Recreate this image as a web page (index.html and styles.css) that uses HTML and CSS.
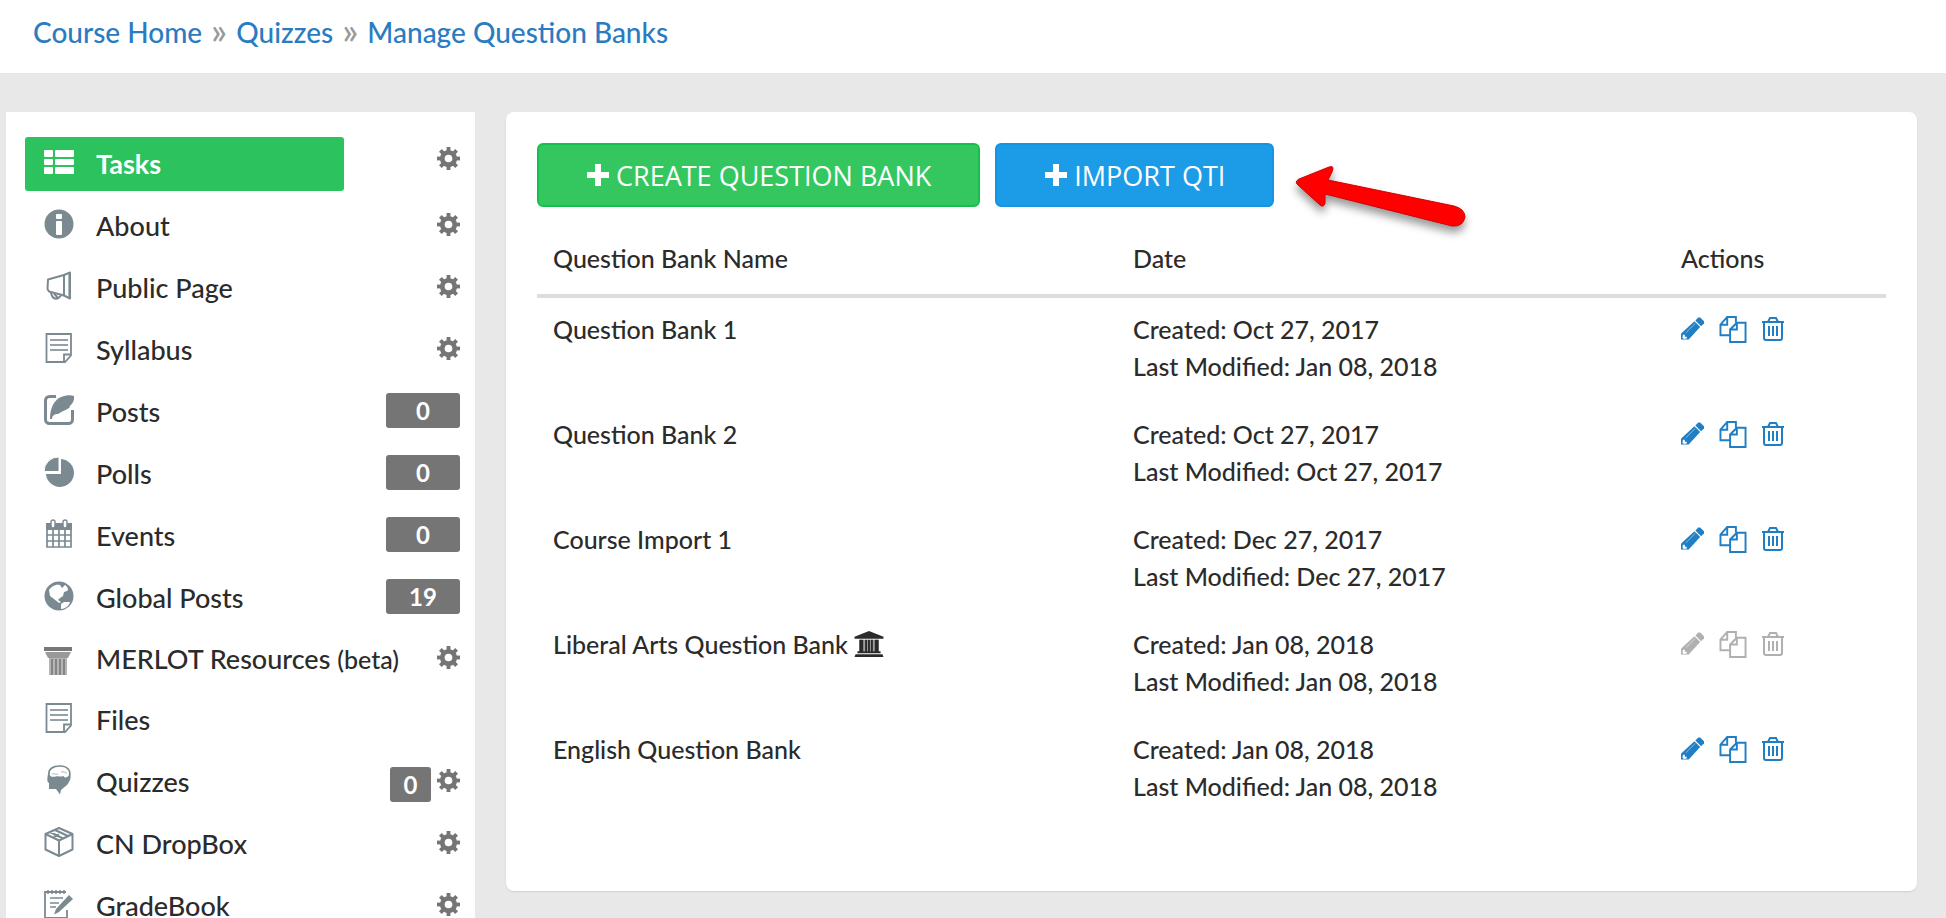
FILE: index.html
```html
<!DOCTYPE html>
<html lang="en">
<head>
    <meta charset="UTF-8">
    <title>Manage Question Banks</title>
    <link rel="stylesheet" href="styles.css">
</head>
<body>
    <!-- icon sprite -->
    <svg class="sprite" aria-hidden="true">
        <symbol id="i-cog" viewBox="0 0 24 24">
            <g fill="currentColor">
                <rect x="10" y="0" width="4" height="24"/>
                <rect x="10" y="0" width="4" height="24" transform="rotate(45 12 12)"/>
                <rect x="10" y="0" width="4" height="24" transform="rotate(90 12 12)"/>
                <rect x="10" y="0" width="4" height="24" transform="rotate(135 12 12)"/>
                <circle cx="12" cy="12" r="9"/>
            </g>
            <circle cx="12" cy="12" r="4" fill="#fff"/>
        </symbol>
        <symbol id="i-tasks" viewBox="0 0 30 30">
            <g fill="currentColor">
                <rect x="0" y="3" width="9" height="7" rx="1"/><rect x="11" y="3" width="19" height="7" rx="1"/>
                <rect x="0" y="12" width="9" height="6" rx="1"/><rect x="11" y="12" width="19" height="6" rx="1"/>
                <rect x="0" y="20" width="9" height="7" rx="1"/><rect x="11" y="20" width="19" height="7" rx="1"/>
            </g>
        </symbol>
        <symbol id="i-info" viewBox="0 0 30 30">
            <circle cx="15" cy="15" r="14.5" fill="currentColor"/>
            <rect x="12" y="5" width="6" height="5" rx="1" fill="#fff"/>
            <rect x="12" y="12" width="6" height="14" rx="1" fill="#fff"/>
        </symbol>
        <symbol id="i-horn" viewBox="0 0 30 30">
            <g fill="none" stroke="currentColor" stroke-width="2" stroke-linejoin="round">
                <path d="M20 4 4 8.500 3.500 18 5 20.500 20 24.500z"/>
                <path d="M20 4 26 1.500V27.500L20 24.500"/>
                <path d="M7 21.500C8 28 13 30 17 24.500M10 22.500 14 27"/>
            </g>
            <path d="M24 2.500 27 1V28L24 26.500z" fill="currentColor" opacity=".6"/>
        </symbol>
        <symbol id="i-doc" viewBox="0 0 30 30">
            <path d="M2.500 1H27V22.500L21 29H2.500z" fill="none" stroke="currentColor" stroke-width="1.800"/>
            <path d="M26.500 21.500H20V28.500" fill="none" stroke="currentColor" stroke-width="1.800"/>
            <path d="M6 7H24M6 12H24M6 17H24" stroke="currentColor" stroke-width="2.200" opacity=".8"/>
        </symbol>
        <symbol id="i-post" viewBox="0 0 30 30">
            <path d="M12 1.500H5.500A4 4 0 0 0 1.500 5.500V24.500A4 4 0 0 0 5.500 28.500H24.500A4 4 0 0 0 28.500 24.500V15" fill="none" stroke="currentColor" stroke-width="3"/>
            <path d="M6 24C6 13 10 5 17 2 22 0 27 0 30 1 31 9 24 11 26 12 23 15 20 15 14 19 10 19 8 21 8 24z" fill="currentColor"/>
        </symbol>
        <symbol id="i-pie" viewBox="0 0 30 30">
            <path d="M17 2A14 14 0 1 1 2 17H17z" fill="currentColor"/>
            <path d="M15 0V14.500H0A14.500 14.500 0 0 1 15 0z" fill="currentColor" stroke="#fff" stroke-width="1"/>
        </symbol>
        <symbol id="i-cal" viewBox="0 0 30 30">
            <path d="M2 4H28V11H2z" fill="currentColor"/>
            <path d="M3 10V28H27V10M9 10V28M15 10V28M21 10V28M3 16H27M3 22H27" fill="none" stroke="currentColor" stroke-width="1.700"/>
            <g fill="#fff" stroke="currentColor" stroke-width="1.400"><rect x="7" y="1" width="4" height="8" rx="2"/><rect x="19" y="1" width="4" height="8" rx="2"/></g>
        </symbol>
        <symbol id="i-globe" viewBox="0 0 30 30">
            <circle cx="15" cy="15" r="14.500" fill="currentColor"/>
            <path d="M5 9C7 6 11 3 16 4L18 7 21 4C24 6 25 9 23 10L20 11 19 15 16 17 14 19 17 21 15 22 10 18 6 15z" fill="#fff"/>
            <path d="M17 23 20 21 26 21C25 25 21 28 17 28z" fill="#fff"/>
        </symbol>
        <symbol id="i-column" viewBox="0 0 30 30">
            <path d="M0 1H28V5H0z" fill="#777"/>
            <path d="M1 6H27L24 12H4z" fill="#999"/>
            <path d="M5 12H23V29H5z" fill="#b4b4b4"/>
            <path d="M8 13V29M12 13V29M16 13V29M20 13V29" stroke="#858585" stroke-width="2"/>
        </symbol>
        <symbol id="i-head" viewBox="0 0 30 30">
            <path d="M4 9C3 14 3 17 5 18V24H12L16 29.500 17 25 23 20C27 15 27 12 26 9z" fill="currentColor"/>
            <path d="M5 10C4 4 9 1 16 1S27 5 25.500 11C23 14 20 14 19 12 16 13 14 12 13 12 9 13 5 13 5 10z" fill="#fff" stroke="currentColor" stroke-width="1.700"/>
            <path d="M8 9C11 8 11 10 14 9M17 7C20 6 21 8 23 8" fill="none" stroke="currentColor" stroke-width="1" opacity=".6"/>
        </symbol>
        <symbol id="i-box" viewBox="0 0 30 30">
            <path d="M15 1 28.500 7V22.500L15 29 1.500 22.500V7zM1.500 7 15 13.500 28.500 7M15 13.500V29M6 5 19 11.500M11 3 24 9M15 7.500 10 10" fill="none" stroke="currentColor" stroke-width="2" stroke-linejoin="round"/>
        </symbol>
        <symbol id="i-grade" viewBox="0 0 30 30">
            <path d="M22 3H1V29H23V21" fill="none" stroke="currentColor" stroke-width="1.800"/>
            <path d="M4 1V5M8 1V5M12 1V5M16 1V5M20 1V5" stroke="currentColor" stroke-width="1.500"/>
            <path d="M6 9H19M6 14H15M6 18H12" stroke="currentColor" stroke-width="1.500"/>
            <path d="M25 6 29 10 15 23 10 25.500 12 20z" fill="currentColor"/>
        </symbol>
        <symbol id="i-bank" viewBox="0 0 30 28">
            <path d="M15 0 30 6V8H0V6z" fill="currentColor"/>
            <path d="M5 9H9V21H11V9H13V21H14V9H16V21H17V9H19V21H21V9H25V21H27V23H3V21H5z" fill="currentColor"/>
            <path d="M5 9H25V21H5z" fill="currentColor" opacity=".45"/>
            <path d="M1 24H29L30 27H0z" fill="currentColor"/>
        </symbol>
        <symbol id="i-plus" viewBox="0 0 22 22">
            <path d="M8 0H14V8H22V14H14V22H8V14H0V8H8z" fill="currentColor"/>
        </symbol>
        <symbol id="i-pencil" viewBox="0 0 24 24">
            <path d="M1 16 14 4 20 10 8 23H0V17z" fill="currentColor"/>
            <path d="M15 3 18 0H20L24 4V6L21 9z" fill="currentColor"/>
            <path d="M2 18H4V20H6V22L3 22.500 1.500 21z" fill="#fff"/>
            <path d="M5 16 15 6" stroke="#fff" stroke-width="1" opacity=".5"/>
        </symbol>
        <symbol id="i-copy" viewBox="0 0 28 28">
            <g fill="none" stroke="currentColor" stroke-width="2">
                <path d="M11 20H1V9L8 1H17V7M8 1V9H1"/>
                <path d="M11 14V27H27V7H18zM18 7V14H11" fill="#fff"/>
            </g>
        </symbol>
        <symbol id="i-trash" viewBox="0 0 22 24">
            <g fill="none" stroke="currentColor" stroke-width="2">
                <path d="M0 5H22M6 5 8 1H14L16 5"/>
                <path d="M2 5V21Q2 23 4 23H18Q20 23 20 21V5"/>
            </g>
            <path d="M7 9V19M11 9V19M15 9V19" stroke="currentColor" stroke-width="2"/>
        </symbol>
    </svg>

    <nav class="breadcrumb">
        <a href="#">Course Home</a>
        <span class="sep">»</span>
        <a href="#">Quizzes</a>
        <span class="sep">»</span>
        <a href="#">Manage Question Banks</a>
    </nav>

    <div class="container">
        <ul class="sidebar">
            <li class="active">
                <a href="#"><svg class="icon"><use href="#i-tasks"/></svg>Tasks</a>
                <button class="cog" aria-label="Tasks settings"><svg><use href="#i-cog"/></svg></button>
            </li>
            <li>
                <a href="#"><svg class="icon"><use href="#i-info"/></svg>About</a>
                <button class="cog" aria-label="About settings"><svg><use href="#i-cog"/></svg></button>
            </li>
            <li>
                <a href="#"><svg class="icon"><use href="#i-horn"/></svg>Public Page</a>
                <button class="cog" aria-label="Public Page settings"><svg><use href="#i-cog"/></svg></button>
            </li>
            <li>
                <a href="#"><svg class="icon"><use href="#i-doc"/></svg>Syllabus</a>
                <button class="cog" aria-label="Syllabus settings"><svg><use href="#i-cog"/></svg></button>
            </li>
            <li>
                <a href="#"><svg class="icon"><use href="#i-post"/></svg>Posts</a>
                <span class="badge">0</span>
            </li>
            <li>
                <a href="#"><svg class="icon"><use href="#i-pie"/></svg>Polls</a>
                <span class="badge">0</span>
            </li>
            <li>
                <a href="#"><svg class="icon"><use href="#i-cal"/></svg>Events</a>
                <span class="badge">0</span>
            </li>
            <li>
                <a href="#"><svg class="icon"><use href="#i-globe"/></svg>Global Posts</a>
                <span class="badge">19</span>
            </li>
            <li class="merlot">
                <a href="#"><svg class="icon"><use href="#i-column"/></svg><span>MERLOT Resources <small>(beta)</small></span></a>
                <button class="cog" aria-label="MERLOT Resources settings"><svg><use href="#i-cog"/></svg></button>
            </li>
            <li>
                <a href="#"><svg class="icon"><use href="#i-doc"/></svg>Files</a>
            </li>
            <li>
                <a href="#"><svg class="icon"><use href="#i-head"/></svg>Quizzes</a>
                <span class="badge small">0</span>
                <button class="cog" aria-label="Quizzes settings"><svg><use href="#i-cog"/></svg></button>
            </li>
            <li>
                <a href="#"><svg class="icon"><use href="#i-box"/></svg>CN DropBox</a>
                <button class="cog" aria-label="CN DropBox settings"><svg><use href="#i-cog"/></svg></button>
            </li>
            <li>
                <a href="#"><svg class="icon"><use href="#i-grade"/></svg>GradeBook</a>
                <button class="cog" aria-label="GradeBook settings"><svg><use href="#i-cog"/></svg></button>
            </li>
        </ul>

        <main class="content">
            <div class="toolbar">
                <button class="btn create-btn"><svg><use href="#i-plus"/></svg>CREATE QUESTION BANK</button>
                <button class="btn import-btn"><svg><use href="#i-plus"/></svg>IMPORT QTI</button>
                <svg class="arrow" viewBox="0 0 180 80" aria-hidden="true">
                    <path d="M7 26Q3 23 8 20L38 8Q44 6 41 13L37 21 163 47Q174 50 174 58 172 68 161 67L34 35V44Q33 49 29 46z" fill="#f00" stroke="#d00000" stroke-width="1"/>
                </svg>
            </div>

            <table class="banks">
                <thead>
                    <tr>
                        <th class="col-name">Question Bank Name</th>
                        <th class="col-date">Date</th>
                        <th>Actions</th>
                    </tr>
                </thead>
                <tbody id="bank-list"></tbody>
            </table>
        </main>
    </div>

    <script>
        const banks = [
            { name: 'Question Bank 1', created: 'Oct 27, 2017', modified: 'Jan 08, 2018' },
            { name: 'Question Bank 2', created: 'Oct 27, 2017', modified: 'Oct 27, 2017' },
            { name: 'Course Import 1', created: 'Dec 27, 2017', modified: 'Dec 27, 2017' },
            { name: 'Liberal Arts Question Bank', created: 'Jan 08, 2018', modified: 'Jan 08, 2018', shared: true },
            { name: 'English Question Bank', created: 'Jan 08, 2018', modified: 'Jan 08, 2018' }
        ];

        // shared banks belong to the institution and can't be edited here
        document.getElementById('bank-list').innerHTML = banks.map(bank => {
            const off = bank.shared ? 'disabled' : '';
            const mark = bank.shared ? ' <svg class="bank-icon"><use href="#i-bank"/></svg>' : '';
            return `<tr>
                <td>${bank.name}${mark}</td>
                <td>Created: ${bank.created}<br>Last Modified: ${bank.modified}</td>
                <td>
                    <div class="actions">
                        <button aria-label="Edit" ${off}><svg class="edit"><use href="#i-pencil"/></svg></button>
                        <button aria-label="Copy" ${off}><svg class="copy"><use href="#i-copy"/></svg></button>
                        <button aria-label="Delete" ${off}><svg class="trash"><use href="#i-trash"/></svg></button>
                    </div>
                </td>
            </tr>`;
        }).join('');
    </script>
</body>
</html>
```
FILE: styles.css
```css
* {
    box-sizing: border-box;
}
body {
    margin: 0;
    height: 100vh;
    overflow: hidden;
    background: #e8e8e8;
    color: #2b2b2b;
    font-family: "Lato", "Liberation Sans", sans-serif;
    font-size: 25px;
    font-weight: 500;
}
a {
    text-decoration: none;
}
button {
    border: none;
    padding: 0;
    background: none;
    cursor: pointer;
}
svg {
    display: block;
}
.sprite {
    position: absolute;
    width: 0;
    height: 0;
}
.breadcrumb {
    display: flex;
    gap: 9px;
    padding: 14px 33px 23px;
    background: white;
    font-size: 28px;
    line-height: 36px;
}
.breadcrumb a {
    color: #2a7cc2;
}
.breadcrumb .sep {
    color: #999;
    font-size: 37px;
    line-height: 32px;
}
.container {
    display: flex;
    align-items: flex-start;
    padding: 39px 29px 0 6px;
}

/* sidebar */
.sidebar {
    flex: 0 0 469px;
    margin: 0 31px 0 0;
    padding: 25px 15px 0 19px;
    list-style: none;
    background: white;
    font-size: 27px;
}
.sidebar li {
    display: flex;
    align-items: center;
    height: 54px;
    margin-bottom: 8px;
}
.sidebar li.merlot {
    height: 52px;
}
.sidebar a {
    display: flex;
    flex: 1;
    align-items: center;
    height: 100%;
    padding-left: 19px;
    padding-bottom: 2px;
    color: #2b2b2b;
    white-space: nowrap;
}
.sidebar .active a {
    flex: 0 0 319px;
    border-radius: 3px;
    background: #2cc25e;
    color: white;
    font-weight: bold;
}
.icon {
    width: 30px;
    height: 30px;
    margin-right: 22px;
    margin-bottom: 2px;
    color: #7b8a91;
}
.merlot .icon {
    margin-top: 6px;
    margin-bottom: 0;
}
.active .icon {
    color: white;
}
.sidebar small {
    font-size: 25px;
}
.cog {
    margin-left: auto;
    color: #757575;
}
.cog svg {
    width: 23px;
    height: 23px;
    margin-bottom: 4px;
}
.active .cog {
    margin-bottom: 8px;
}
.badge {
    width: 74px;
    height: 35px;
    margin-bottom: 3px;
    border-radius: 3px;
    background: #757575;
    color: white;
    font-size: 24px;
    font-weight: bold;
    line-height: 36px;
    text-align: center;
}
.badge.small {
    width: 41px;
    margin: 4px 6px 0 0;
}

/* main card */
.content {
    flex: 1;
    min-height: 779px;
    padding: 31px;
    border-radius: 8px;
    background: white;
    box-shadow: 0 1px 2px rgba(0, 0, 0, 0.1);
}
.toolbar {
    display: flex;
    align-items: flex-start;
    gap: 15px;
    height: 64px;
}
.btn {
    display: flex;
    align-items: center;
    gap: 7px;
    height: 64px;
    padding: 0 47px 0 48px;
    border: 2px solid #17c04d;
    border-radius: 6px;
    background: #34c75f;
    color: white;
    font-family: "Open Sans", sans-serif;
    font-size: 27px;
    font-weight: 500;
    white-space: nowrap;
}
.btn svg {
    width: 22px;
    height: 22px;
}
.import-btn {
    border-color: #1494e4;
    background: #1c9be6;
}
.arrow {
    width: 180px;
    height: 80px;
    margin-top: 16px;
    margin-left: 2px;
    filter: drop-shadow(0 6px 4px rgba(0, 0, 0, 0.4));
}
.banks {
    width: 100%;
    border-collapse: collapse;
    table-layout: fixed;
    line-height: 37px;
}
.banks th {
    padding: 33px 16px 17px;
    border-bottom: 4px solid #ddd;
    font-weight: 500;
    text-align: left;
}
.banks td {
    padding: 13px 16px 18px;
    vertical-align: top;
}
.col-name {
    width: 43%;
}
.col-date {
    width: 548px;
}
.bank-icon {
    display: inline-block;
    width: 30px;
    height: 27px;
    vertical-align: -4px;
}
.actions {
    display: flex;
    align-items: center;
    height: 36px;
    gap: 15px;
}
.actions button {
    color: #1f7ec4;
}
.actions button:disabled {
    color: #b0b0b0;
}
.edit {
    width: 23px;
    height: 24px;
}
.copy {
    width: 28px;
    height: 27px;
}
.trash {
    width: 22px;
    height: 24px;
}
```
